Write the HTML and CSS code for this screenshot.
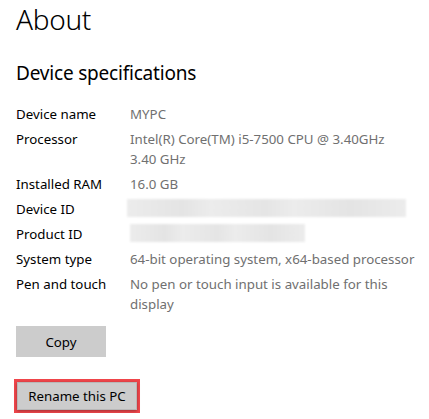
FILE: index.html
```html
<!DOCTYPE html>
<html>
<head>
<meta charset="utf-8">
<link rel="stylesheet" href="styles.css">
</head>
<body>
<div class="page">
  <h1 class="title">About</h1>
  <h2 class="section">Device specifications</h2>
  <div class="specs">
    <div class="label">Device name</div><div class="value">MYPC</div>
    <div class="label">Processor</div><div class="value">Intel(R) Core(TM) i5-7500 CPU @ 3.40GHz<br>3.40 GHz</div>
    <div class="label">Installed RAM</div><div class="value">16.0 GB</div>
    <div class="label">Device ID</div><div class="value"><span class="blur blur-long"></span></div>
    <div class="label">Product ID</div><div class="value"><span class="blur blur-short"></span></div>
    <div class="label">System type</div><div class="value">64-bit operating system, x64-based processor</div>
    <div class="label">Pen and touch</div><div class="value">No pen or touch input is available for this<br>display</div>
  </div>
  <button class="btn copy">Copy</button>
  <div class="highlight"><button class="btn rename">Rename this PC</button></div>
</div>
</body>
</html>
```

FILE: styles.css
```css
html, body { margin: 0; padding: 0; background: #fff; }
body { font-family: "Noto Sans", "Open Sans", sans-serif; color: #000; }
.page { padding: 0 0 0 16px; }
.title { margin: 0; padding-top: 5px; font-weight: 300; font-size: 28px; line-height: 28px; letter-spacing: -0.3px; }
.section { margin: 27px 0 0; font-weight: 400; font-size: 19px; line-height: 26px; letter-spacing: -0.2px; }
.specs { display: grid; grid-template-columns: 114px 1fr; row-gap: 5px; margin-top: 18px; font-size: 13.3px; line-height: 20px; }
.label { color: #000; }
.value { color: #707070; }
.blur { display: block; height: 18px; background: linear-gradient(90deg, #ececec, #e4e4e4 20%, #ececec 30%, #e5e5e5 50%, #ececec 60%, #e4e4e4 80%, #ececec); filter: blur(1px); }
.blur-long { width: 279px; margin-left: -3px; }
.blur-short { width: 175px; }
.btn { font-family: inherit; font-size: 13.3px; color: #000; background: #cccccc; border: none; padding: 0; }
.copy { display: block; width: 90px; height: 31px; margin-top: 12px; }
.highlight { display: inline-block; margin: 22px 0 0 -2px; border: 3px solid #f0464b; padding: 0; }
.rename { display: block; width: 120px; height: 28px; box-shadow: inset 0 0 0 1px #b8b8b8, 0 1px 3px rgba(0,0,0,0.35); }
```
